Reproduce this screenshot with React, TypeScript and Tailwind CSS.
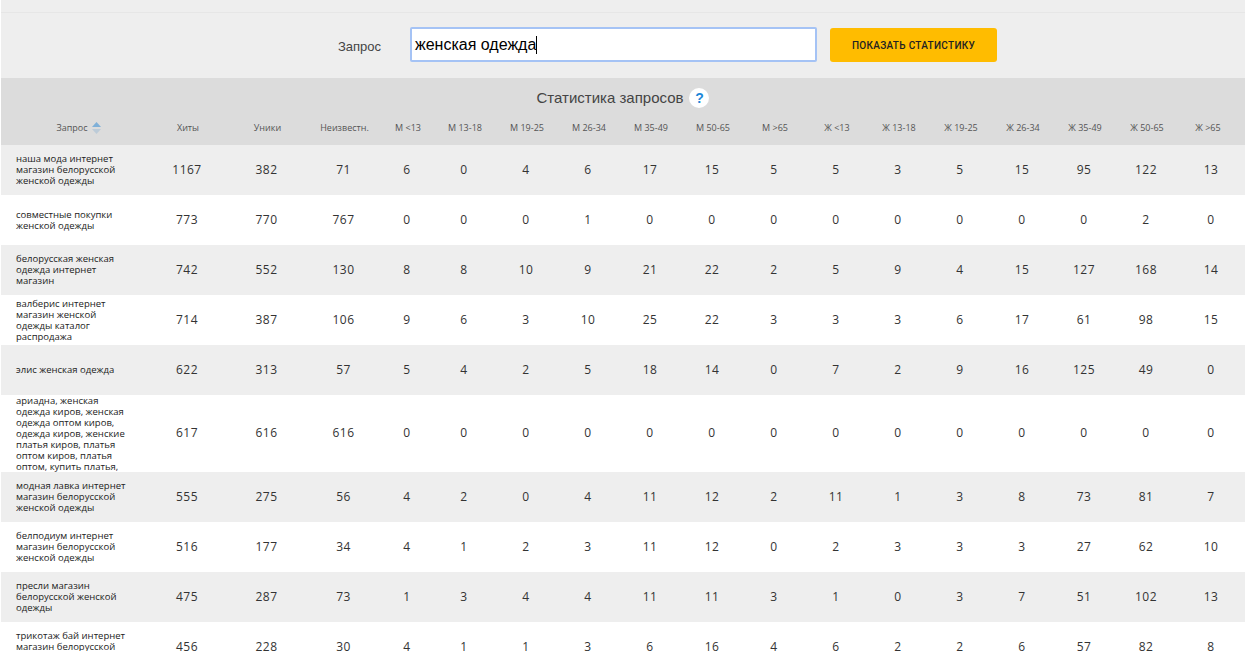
const HEADERS = [
  "Хиты", "Уники", "Неизвестн.",
  "М <13", "М 13-18", "М 19-25", "М 26-34", "М 35-49", "М 50-65", "М >65",
  "Ж <13", "Ж 13-18", "Ж 19-25", "Ж 26-34", "Ж 35-49", "Ж 50-65", "Ж >65",
];

const ROWS: { query: string; h: string; nums: number[] }[] = [
  { query: "наша мода интернет магазин белорусской женской одежды", h: "h-[50px]", nums: [1167, 382, 71, 6, 0, 4, 6, 17, 15, 5, 5, 3, 5, 15, 95, 122, 13] },
  { query: "совместные покупки женской одежды", h: "h-[50px]", nums: [773, 770, 767, 0, 0, 0, 1, 0, 0, 0, 0, 0, 0, 0, 0, 2, 0] },
  { query: "белорусская женская одежда интернет магазин", h: "h-[50px]", nums: [742, 552, 130, 8, 8, 10, 9, 21, 22, 2, 5, 9, 4, 15, 127, 168, 14] },
  { query: "валберис интернет магазин женской одежды каталог распродажа", h: "h-[50px]", nums: [714, 387, 106, 9, 6, 3, 10, 25, 22, 3, 3, 3, 6, 17, 61, 98, 15] },
  { query: "элис женская одежда", h: "h-[50px]", nums: [622, 313, 57, 5, 4, 2, 5, 18, 14, 0, 7, 2, 9, 16, 125, 49, 0] },
  { query: "ариадна, женская одежда киров, женская одежда оптом киров, одежда киров, женские платья киров, платья оптом киров, платья оптом, купить платья,", h: "h-[77px]", nums: [617, 616, 616, 0, 0, 0, 0, 0, 0, 0, 0, 0, 0, 0, 0, 0, 0] },
  { query: "модная лавка интернет магазин белорусской женской одежды", h: "h-[50px]", nums: [555, 275, 56, 4, 2, 0, 4, 11, 12, 2, 11, 1, 3, 8, 73, 81, 7] },
  { query: "белподиум интернет магазин белорусской женской одежды", h: "h-[50px]", nums: [516, 177, 34, 4, 1, 2, 3, 11, 12, 0, 2, 3, 3, 3, 27, 62, 10] },
  { query: "пресли магазин белорусской женской одежды", h: "h-[50px]", nums: [475, 287, 73, 1, 3, 4, 4, 11, 11, 3, 1, 0, 3, 7, 51, 102, 13] },
  { query: "трикотаж бай интернет магазин белорусской женской одежды", h: "h-[50px]", nums: [456, 228, 30, 4, 1, 1, 3, 6, 16, 4, 6, 2, 2, 6, 57, 82, 8] },
];

const GRID = "grid grid-cols-[146px_80px_79px_75px_52px_repeat(12,62px)_68px]";

export default function App() {
  return (
    <div className="h-[651px] w-[1252px] overflow-hidden bg-white font-['Liberation_Sans',sans-serif]">
      <div className="ml-px w-[1244px]">
        <div className="h-[13px] border-b border-[#e6e6e6] bg-[#eeeeee]" />

        <form className="flex h-[65px] items-start bg-[#eeeeee] pt-[14px]">
          <label className="mt-[12px] w-[380px] text-right text-[13px] leading-[15px] text-[#444]">
            Запрос
          </label>
          <div className="ml-[29px] flex h-[35px] w-[407px] items-center rounded-[2px] border-2 border-[#a5c3f5] bg-white pl-[3px] text-base text-black">
            женская одежда
            <span className="h-[18px] w-px bg-black" />
          </div>
          <button
            type="button"
            className="ml-[13px] mt-px h-[34px] w-[167px] rounded-[3px] bg-[#ffbc00] font-['Roboto',sans-serif] text-[10px] font-medium uppercase tracking-[0.3px] text-[#222]"
          >
            Показать статистику
          </button>
        </form>

        <div className="bg-[#dcdcdc]">
          <div className="flex h-[40px] items-center justify-center gap-[6px]">
            <h2 className="text-[15px] text-[#444]">Статистика запросов</h2>
            <span className="flex size-[20px] items-center justify-center rounded-full bg-white text-sm font-bold text-[#1b87d8]">
              ?
            </span>
          </div>
          <div className={`${GRID} h-[27px] items-start pt-[4px] text-center font-['Open_Sans',sans-serif] text-[9px] leading-[12px] text-[#555]`}>
            <div className="flex items-center justify-center gap-[4px] pl-[9px]">
              Запрос
              <svg width="9" height="12" viewBox="0 0 9 12">
                <path d="M4.5 0 9 5H0z" fill="#7fb0d8" />
                <path d="M0 7h9L4.5 12z" fill="#bccbd8" />
              </svg>
            </div>
            {HEADERS.map((h) => (
              <div key={h} className="pl-[2px] last:pl-0 last:pr-[6px]">{h}</div>
            ))}
          </div>
        </div>

        {ROWS.map((row, i) => (
          <div
            key={row.query}
            className={`${GRID} ${row.h} items-center text-center ${i % 2 === 0 ? "bg-[#eeeeee]" : "bg-white"}`}
          >
            <div className="max-h-[77px] overflow-hidden px-[15px] pb-px text-left font-['Open_Sans',sans-serif] text-[9.5px] leading-[11px] text-[#222]">
              {row.query}
            </div>
            {row.nums.map((n, j) => (
              <div key={j} className={`font-['Open_Sans',sans-serif] text-[12px] tracking-[0.5px] text-[#333] ${i === 5 ? "pb-[2px]" : ""}`}>
                {n}
              </div>
            ))}
          </div>
        ))}
      </div>
    </div>
  );
}
